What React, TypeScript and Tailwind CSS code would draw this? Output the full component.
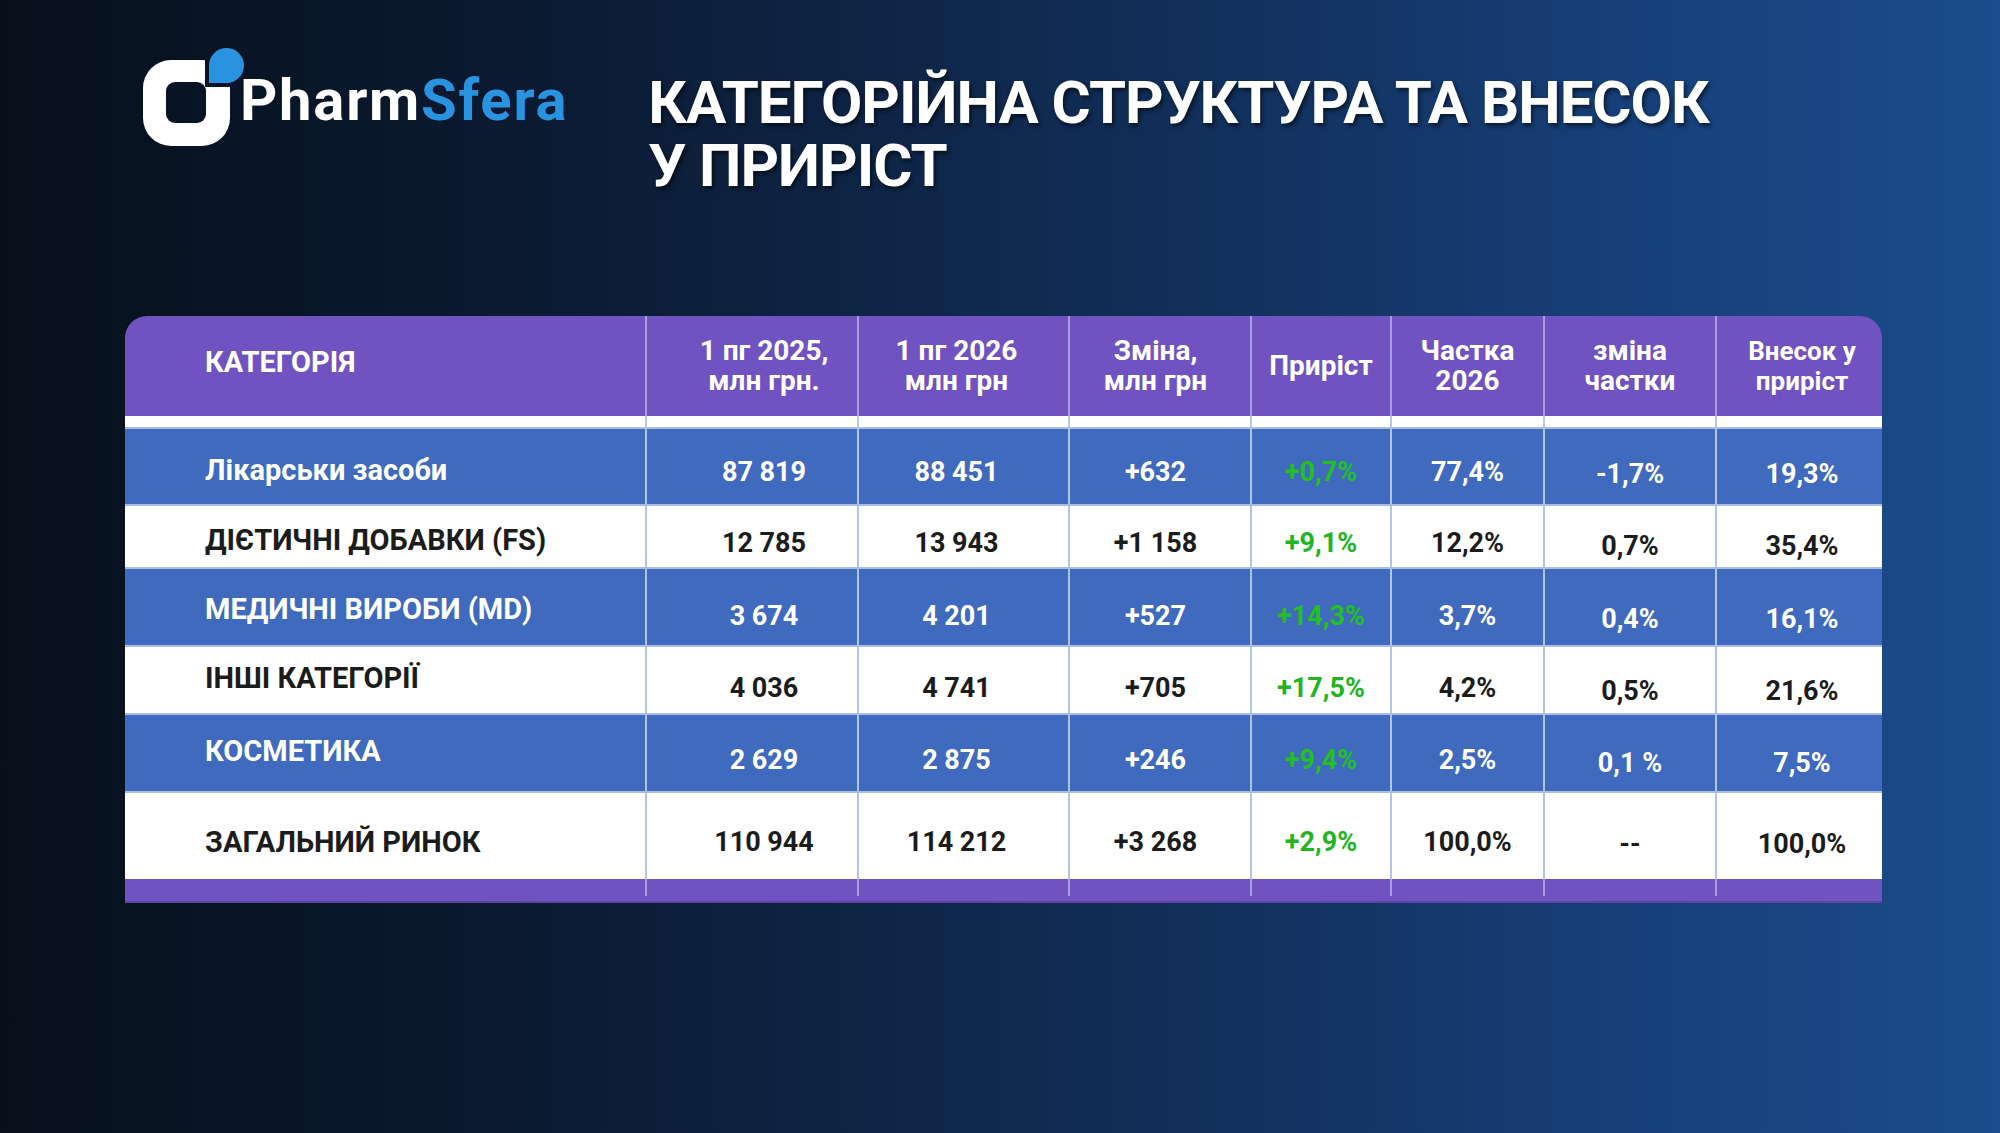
import React from 'react';

const grid = 'grid grid-cols-[520px_212px_211px_182px_140px_153px_172px_167px]';

// horizontal nudges per column, read off the reference
const colAlign = [
    'justify-start pl-[80px]',
    'justify-center pl-[24px]',
    'justify-center pr-[14px]',
    'justify-center pr-[9px]',
    'justify-center',
    'justify-center',
    'justify-center',
    'justify-center pl-[5px]',
];

interface Row {
    name: string;
    vals: string[];
    blue: boolean;
    h: string;
    cat: string;
    num: string;
    last: string;
}

const rows: Row[] = [
    { name: 'Лікарськи засоби', vals: ['87 819', '88 451', '+632', '+0,7%', '77,4%', '-1,7%', '19,3%'], blue: true, h: 'h-[77px]', cat: 'pt-[8px]', num: 'pt-[11px]', last: 'pt-[15px]' },
    { name: 'ДІЄТИЧНІ ДОБАВКИ (FS)', vals: ['12 785', '13 943', '+1 158', '+9,1%', '12,2%', '0,7%', '35,4%'], blue: false, h: 'h-[63px]', cat: 'pt-[8px]', num: 'pt-[13px]', last: 'pt-[20px]' },
    { name: 'МЕДИЧНІ ВИРОБИ (MD)', vals: ['3 674', '4 201', '+527', '+14,3%', '3,7%', '0,4%', '16,1%'], blue: true, h: 'h-[78px]', cat: 'pt-[5px]', num: 'pt-[19px]', last: 'pt-[24px]' },
    { name: 'ІНШІ КАТЕГОРІЇ', vals: ['4 036', '4 741', '+705', '+17,5%', '4,2%', '0,5%', '21,6%'], blue: false, h: 'h-[68px]', cat: 'pb-[3px]', num: 'pt-[16px]', last: 'pt-[23px]' },
    { name: 'КОСМЕТИКА', vals: ['2 629', '2 875', '+246', '+9,4%', '2,5%', '0,1 %', '7,5%'], blue: true, h: 'h-[78px]', cat: 'pb-[3px]', num: 'pt-[15px]', last: 'pt-[21px]' },
    { name: 'ЗАГАЛЬНИЙ РИНОК', vals: ['110 944', '114 212', '+3 268', '+2,9%', '100,0%', '--', '100,0%'], blue: false, h: 'h-[88px]', cat: 'pt-[13px]', num: 'pt-[13px]', last: 'pt-[17px]' },
];

const headers = [
    ['КАТЕГОРІЯ'],
    ['1 пг 2025,', 'млн грн.'],
    ['1 пг 2026', 'млн грн'],
    ['Зміна,', 'млн грн'],
    ['Приріст'],
    ['Частка', '2026'],
    ['зміна', 'частки'],
    ['Внесок у', 'приріст'],
];

function Logo() {
    return (
        <div className="flex items-start shrink-0">
            <svg width="105" height="105" viewBox="0 0 105 105" className="shrink-0">
                <defs>
                    <mask id="logo-cut">
                        <rect width="105" height="105" fill="white" />
                        <rect x="26" y="37" width="40" height="41" rx="9" fill="black" />
                        <rect x="65" y="0" width="40" height="42" fill="black" />
                    </mask>
                </defs>
                <rect x="3" y="15" width="87" height="86" rx="28" fill="white" mask="url(#logo-cut)" />
                <path d="M69 38 V20.5 A17.5 17.5 0 0 1 86.5 3 A17.5 17.5 0 0 1 104 20.5 A17.5 17.5 0 0 1 86.5 38 Z" fill="#2a93e0" />
            </svg>
            <div className="mt-[26px] ml-[-5px] text-[58px] leading-none font-bold tracking-[0.03em] whitespace-nowrap">
                <span className="text-white">Pharm</span>
                <span className="text-[#2a93e0]">Sfera</span>
            </div>
        </div>
    );
}

export default function App() {
    return (
        <div className="w-[2000px] h-[1133px] overflow-hidden font-['Roboto',sans-serif] bg-[linear-gradient(90deg,#07101b_0%,#0b1b33_28%,#112c54_55%,#17407a_82%,#1c4c8b_100%)]">
            <div className="flex items-start h-[316px] pl-[140px] pt-[45px]">
                <Logo />
                <h1 className="ml-[80px] mt-[26px] text-white font-bold text-[60px] leading-[63px] tracking-[-0.017em] whitespace-nowrap [text-shadow:2px_3px_4px_rgba(0,0,0,0.55)]">
                    <span className="block">КАТЕГОРІЙНА СТРУКТУРА ТА ВНЕСОК</span>
                    <span className="block">У ПРИРІСТ</span>
                </h1>
            </div>

            <div className="ml-[125px] w-[1757px] rounded-t-[22px] overflow-hidden">
                <div className={`${grid} h-[100px] bg-[#7152c1] text-white font-bold text-[28px] leading-[30px]`}>
                    {headers.map((lines, i) => (
                        <div
                            key={i}
                            className={`flex items-center text-center ${colAlign[i]} ${i > 0 ? 'border-l-2 border-[#a89ce3]' : 'pb-[8px] text-[29px]'} ${i === 7 ? 'text-[26px]' : ''}`}
                        >
                            <div>
                                {lines.map((l) => (
                                    <div key={l}>{l}</div>
                                ))}
                            </div>
                        </div>
                    ))}
                </div>

                <div className={`${grid} h-[11px] bg-white`}>
                    {headers.map((_, i) => (
                        <div key={i} className={i > 0 ? 'border-l-2 border-[#b7c7e4]' : ''} />
                    ))}
                </div>

                {rows.map((r) => (
                    <div
                        key={r.name}
                        className={`${grid} ${r.h} border-t-2 border-[#a9bde3] font-bold text-[27px] leading-none ${r.blue ? 'bg-[#3f6abd] text-white' : 'bg-white text-[#1c1c1c]'}`}
                    >
                        <div className={`flex items-center text-[29px] ${colAlign[0]} ${r.cat}`}>{r.name}</div>
                        {r.vals.map((v, j) => {
                            const col = j + 1;
                            const pad = col >= 6 ? r.last : r.num;
                            const green = col === 4 ? (r.blue ? 'text-[#22c022]' : 'text-[#22b422]') : '';
                            return (
                                <div
                                    key={j}
                                    className={`flex items-center border-l-2 border-[#b2c4e4] ${colAlign[col]} ${pad} ${green}`}
                                >
                                    {v}
                                </div>
                            );
                        })}
                    </div>
                ))}

                <div className={`${grid} h-[24px] bg-[#7152c1] border-b-2 border-[#5e44a8]`}>
                    {headers.map((_, i) => (
                        <div key={i} className={i > 0 ? 'border-l-2 border-[#a89ce3] mb-[5px]' : ''} />
                    ))}
                </div>
            </div>
        </div>
    );
}
